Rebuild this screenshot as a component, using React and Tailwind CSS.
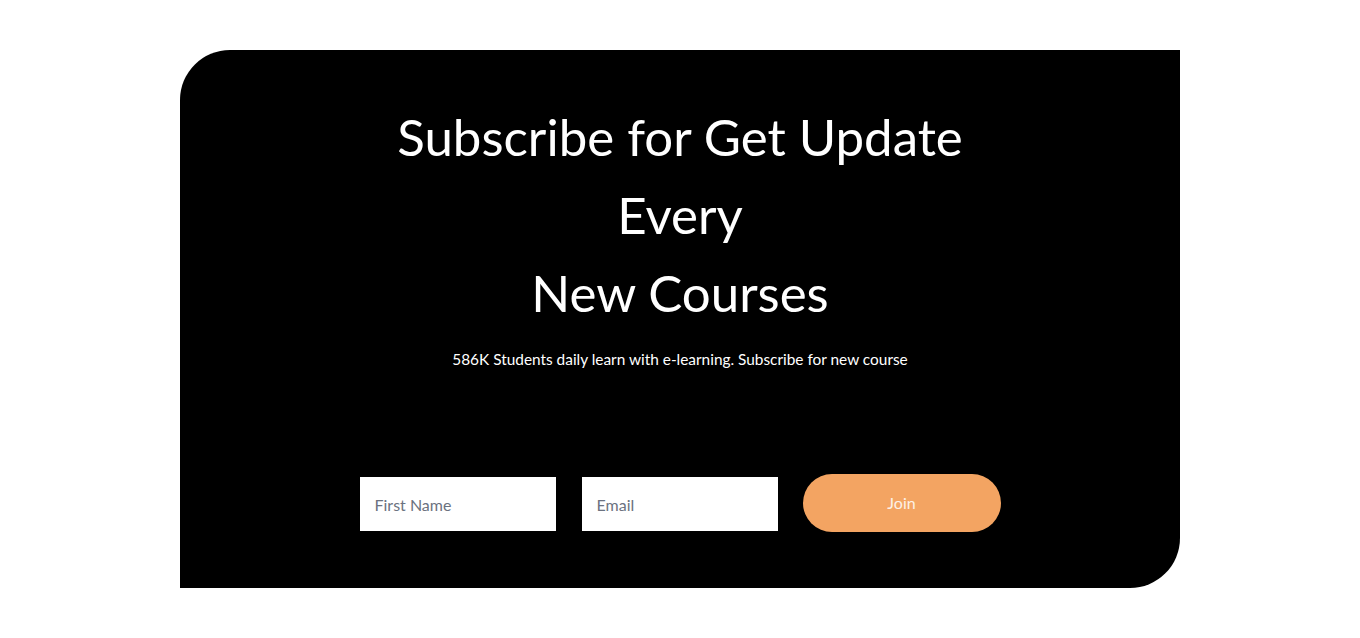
import React, { useState } from 'react';

const App = () => {
  const [firstName, setFirstName] = useState('');
  const [email, setEmail] = useState('');

  return (
    <div className="min-h-[638px] bg-white pt-[50px] font-['Lato',sans-serif]">
      <section className="mx-auto flex h-[538px] w-[1000px] flex-col items-center rounded-tl-[50px] rounded-br-[50px] bg-black pt-[48px] text-white">
        <h2 className="text-center text-[51px] font-normal leading-[78px]">
          Subscribe for Get Update
          <br />
          Every
          <br />
          New Courses
        </h2>
        <p className="mt-[15px] text-[15.4px] leading-6">
          586K Students daily learn with e-learning. Subscribe for new course
        </p>
        <form
          className="mt-[103px] flex items-start"
          onSubmit={(e) => e.preventDefault()}
        >
          <input
            value={firstName}
            onChange={(e) => setFirstName(e.target.value)}
            placeholder="First Name"
            className="mt-[3px] h-[54px] w-[196px] bg-white px-[15px] text-[16px] text-gray-800 outline-none placeholder:text-[#6b7280]"
          />
          <input
            value={email}
            onChange={(e) => setEmail(e.target.value)}
            placeholder="Email"
            className="ml-[26px] mt-[3px] h-[54px] w-[196px] bg-white px-[15px] text-[16px] text-gray-800 outline-none placeholder:text-[#6b7280]"
          />
          <button
            type="submit"
            className="ml-[25px] h-[58px] w-[198px] rounded-full bg-[#f3a462] text-[16px] text-[#fdf1e6]"
          >
            Join
          </button>
        </form>
      </section>
    </div>
  );
};

export default App;
